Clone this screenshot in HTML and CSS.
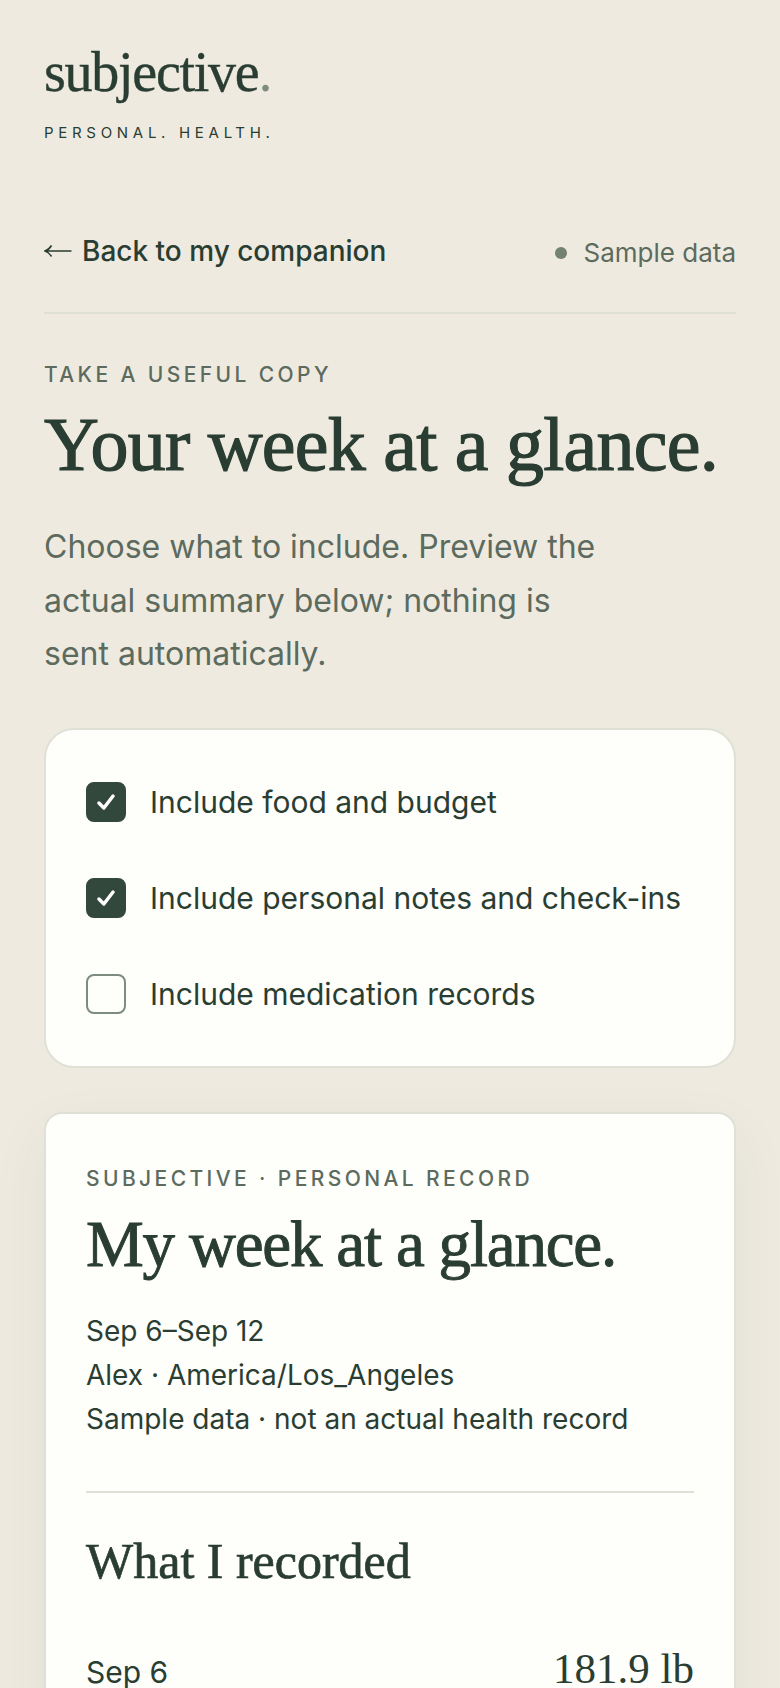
FILE: index.html
```html
<!DOCTYPE html>
<html lang="en">
<head>
  <meta charset="UTF-8">
  <title>Subjective - Your week at a glance</title>
  <link rel="stylesheet" href="styles.css">
</head>
<body>

<div class="page">

  <header class="brand">
    <div class="logo">subjective<span class="logo-dot">.</span></div>
    <div class="tagline">PERSONAL. HEALTH.</div>
  </header>

  <nav class="topbar">
    <a class="back" href="#">
      <svg class="back-arrow" viewBox="0 0 28 16" width="28" height="16"><path d="M27.5 8H1.5M7.5 2.5C6 5 4 7 1 8c3 1 5 3 6.5 5.5" fill="none" stroke="#2a3d32" stroke-width="1.6"/></svg>
      Back to my companion
    </a>
    <span class="sample"><span class="sample-dot"></span>Sample data</span>
  </nav>

  <section class="intro">
    <div class="eyebrow">TAKE A USEFUL COPY</div>
    <h1>Your week at a glance.</h1>
    <p>Choose what to include. Preview the actual summary below; nothing is sent automatically.</p>
  </section>

  <div class="card options">
    <label class="option">
      <span class="box checked">
        <svg viewBox="0 0 24 24" width="26" height="26"><path d="M5.5 13l4.5 4.5L18.5 6.5" fill="none" stroke="#fff" stroke-width="3.2" stroke-linecap="round" stroke-linejoin="round"/></svg>
      </span>
      Include food and budget
    </label>
    <label class="option">
      <span class="box checked">
        <svg viewBox="0 0 24 24" width="26" height="26"><path d="M5.5 13l4.5 4.5L18.5 6.5" fill="none" stroke="#fff" stroke-width="3.2" stroke-linecap="round" stroke-linejoin="round"/></svg>
      </span>
      Include personal notes and check-ins
    </label>
    <label class="option">
      <span class="box"></span>
      Include medication records
    </label>
  </div>

  <article class="card summary">
    <div class="eyebrow small">SUBJECTIVE · PERSONAL RECORD</div>
    <h2>My week at a glance.</h2>
    <div class="meta">
      <div>Sep 6–Sep 12</div>
      <div>Alex · America/Los_Angeles</div>
      <div>Sample data · not an actual health record</div>
    </div>
    <hr>
    <h3>What I recorded</h3>
    <div class="row">
      <span>Sep 6</span>
      <span class="value">181.9 lb</span>
    </div>
  </article>

</div>

</body>
</html>
```

FILE: styles.css
```css
html, body {
  margin: 0;
  height: 1688px;
  overflow: hidden;
}

body {
  font-family: Inter, 'Noto Sans', sans-serif;
  background: #eeeae0;
  color: #2a3d32;
}

.page {
  padding: 42px 44px 0;
}

.logo {
  font-family: 'Liberation Serif', serif;
  font-size: 56px;
  line-height: 60px;
  letter-spacing: -1.26px;
  -webkit-text-stroke: 0.4px #2a3d32;
}

.logo-dot {
  color: #7d8c7e;
  -webkit-text-stroke: 0;
}

.tagline {
  font-size: 15px;
  letter-spacing: 4.7px;
  line-height: 18px;
  margin-top: 22px;
}

.topbar {
  display: flex;
  justify-content: space-between;
  align-items: center;
  margin-top: 88px;
  padding-bottom: 41px;
  border-bottom: 2px solid #dfe1d6;
}

.back {
  display: flex;
  align-items: center;
  gap: 10px;
  color: #2a3d32;
  text-decoration: none;
  font-size: 28px;
  font-weight: 500;
  line-height: 36px;
}

.back-arrow {
  flex: none;
}

.sample {
  display: flex;
  align-items: center;
  font-size: 26px;
  line-height: 36px;
  color: #5c6b5e;
  margin-top: 5px;
}

.sample-dot {
  width: 12px;
  height: 12px;
  border-radius: 50%;
  background: #73836f;
  margin-right: 17px;
}

.eyebrow {
  font-size: 21px;
  letter-spacing: 3.4px;
  line-height: 28px;
  font-weight: 500;
  color: #5c6b5e;
}

.intro {
  margin-top: 47px;
}

h1, h2, h3 {
  font-family: 'Liberation Serif', serif;
  font-weight: 400;
  margin: 0;
  color: #2a3d32;
}

h1 {
  font-size: 76px;
  line-height: 80px;
  letter-spacing: -0.77px;
  margin-top: 15px;
  -webkit-text-stroke: 1.2px #2a3d32;
}

.intro p {
  font-size: 32px;
  line-height: 53.5px;
  color: #5c6b5e;
  margin: 36px 0 0;
  max-width: 570px;
}

.card {
  background: #fefefa;
  border: 2px solid #dfe1d6;
}

.options {
  margin-top: 47px;
  border-radius: 30px;
  padding: 52px 40px;
  display: flex;
  flex-direction: column;
  gap: 56px;
}

.option {
  display: flex;
  align-items: center;
  gap: 24px;
  font-size: 30px;
  line-height: 40px;
}

.box {
  width: 40px;
  height: 40px;
  box-sizing: border-box;
  border: 2px solid #7d8c7e;
  border-radius: 8px;
  display: flex;
  align-items: center;
  justify-content: center;
  flex: none;
}

.box.checked {
  background: #33483c;
  border-color: #33483c;
}

.summary {
  margin-top: 44px;
  border-radius: 18px;
  padding: 51px 40px 80px;
  box-shadow: 0 20px 60px rgba(42, 61, 50, 0.06);
}

.eyebrow.small {
  font-size: 21px;
  line-height: 28px;
}

h2 {
  font-size: 65px;
  line-height: 70px;
  letter-spacing: -1.2px;
  margin-top: 16px;
  -webkit-text-stroke: 0.9px #2a3d32;
}

.meta {
  font-size: 28px;
  line-height: 44px;
  margin-top: 30px;
}

hr {
  border: none;
  border-top: 2px solid #dfe1d6;
  margin: 50px 0 0;
}

h3 {
  font-size: 50px;
  line-height: 56px;
  margin-top: 40px;
  -webkit-text-stroke: 0.7px #2a3d32;
}

.row {
  display: flex;
  justify-content: space-between;
  align-items: baseline;
  font-size: 30px;
  margin-top: 55px;
}

.value {
  font-family: 'Liberation Serif', serif;
  font-size: 43px;
}
```
